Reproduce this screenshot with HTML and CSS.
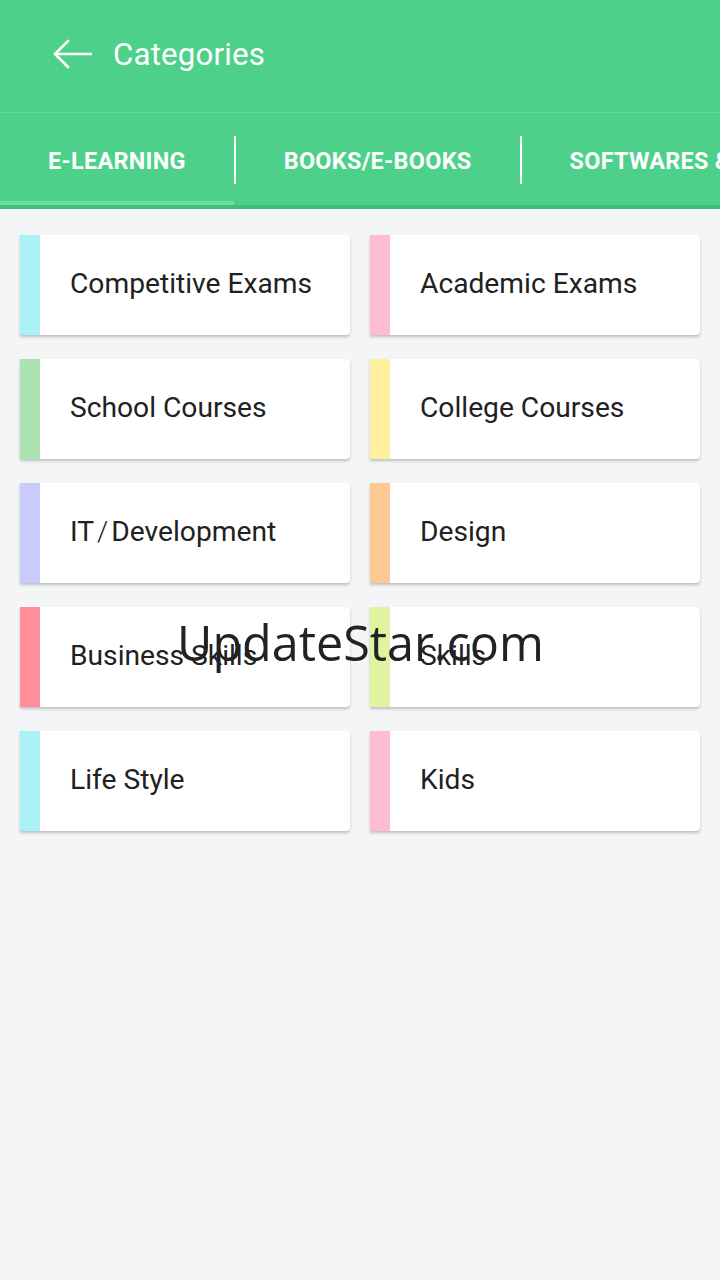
FILE: index.html
```html
<!DOCTYPE html>
<html>
<head>
<meta charset="utf-8">
<link rel="stylesheet" href="styles.css">
</head>
<body>
<div class="app">
  <header class="topbar">
    <svg class="back" width="40" height="30" viewBox="0 0 40 30">
      <path d="M39 15H3M16 2L3 15l13 13" fill="none" stroke="#fff" stroke-width="2.6" stroke-linecap="round" stroke-linejoin="round"/>
    </svg>
    <h1 class="title">Categories</h1>
  </header>
  <nav class="tabs">
    <div class="tab active">E-LEARNING</div>
    <div class="sep"></div>
    <div class="tab">BOOKS/E-BOOKS</div>
    <div class="sep"></div>
    <div class="tab">SOFTWARES &amp; APPS</div>
  </nav>
  <main class="grid">
    <div class="card"><span class="stripe c1"></span><span class="label">Competitive Exams</span></div>
    <div class="card"><span class="stripe c2"></span><span class="label">Academic Exams</span></div>
    <div class="card"><span class="stripe c3"></span><span class="label">School Courses</span></div>
    <div class="card"><span class="stripe c4"></span><span class="label">College Courses</span></div>
    <div class="card"><span class="stripe c5"></span><span class="label">IT<span class="slash">/</span>Development</span></div>
    <div class="card"><span class="stripe c6"></span><span class="label">Design</span></div>
    <div class="card"><span class="stripe c7"></span><span class="label">Business Skills</span></div>
    <div class="card"><span class="stripe c8"></span><span class="label">Skills</span></div>
    <div class="card"><span class="stripe c1"></span><span class="label">Life Style</span></div>
    <div class="card"><span class="stripe c2"></span><span class="label">Kids</span></div>
  </main>
  <div class="watermark">UpdateStar.com</div>
</div>
</body>
</html>
```

FILE: styles.css
```css
* { box-sizing: border-box; margin: 0; padding: 0; }
html, body { width: 720px; height: 1280px; overflow: hidden; }
body { background: #f3f5f7; font-family: Roboto, "Liberation Sans", sans-serif; }
.app { position: relative; width: 720px; height: 1280px; }
.topbar {
  height: 113px; background: #4dd18a;
  display: flex; align-items: center;
  padding-left: 52px; padding-bottom: 4px;
  border-bottom: 1px solid #6ad99e;
}
.back { margin-right: 21px; }
.title { color: #fff; font-weight: 400; font-size: 31.2px; letter-spacing: 0.2px; }
.tabs {
  height: 96px; background: #4dd18a;
  display: flex; align-items: center;
  white-space: nowrap; overflow: hidden;
  border-bottom: 4px solid #44bd7b;
}
.tab {
  height: 100%; display: flex; align-items: center;
  padding: 0 48px; color: #fff; font-weight: 700; font-size: 23.4px;
  letter-spacing: 0.3px; flex-shrink: 0; padding-top: 3px;
}
.tab.active { box-shadow: inset 0 -8px 0 #6fdca2; margin-bottom: -4px; height: calc(100% + 4px); padding-bottom: 4px; padding-top: 3px; }
.sep { width: 2px; height: 48px; background: #fff; flex-shrink: 0; margin-top: 2px; }
.grid {
  display: grid; grid-template-columns: 330px 330px; column-gap: 20px; row-gap: 24px;
  padding: 26px 20px 0 20px;
}
.card {
  height: 100px; background: #fff; display: flex; align-items: center;
  border-radius: 0 4px 4px 0;
  box-shadow: 0 2px 3px rgba(0,0,0,0.22);
}
.stripe { width: 20px; height: 100%; flex-shrink: 0; }
.label { margin-left: 30px; font-size: 28.2px; color: #212121; margin-top: -4px; }
.slash { font-weight: 300; margin: 0 3px; }
.c1 { background: #a9f1f5; }
.c2 { background: #ffbdd3; }
.c3 { background: #ade3b1; }
.c4 { background: #fff09f; }
.c5 { background: #c9cbfd; }
.c6 { background: #ffc994; }
.c7 { background: #ff8e9b; }
.c8 { background: #e1f2a1; }
.watermark {
  position: absolute; left: 0; right: 0; top: 609px; text-align: center;
  font-family: "Open Sans", sans-serif; font-size: 48.5px; color: #222;
  padding-left: 1px;
}
```
